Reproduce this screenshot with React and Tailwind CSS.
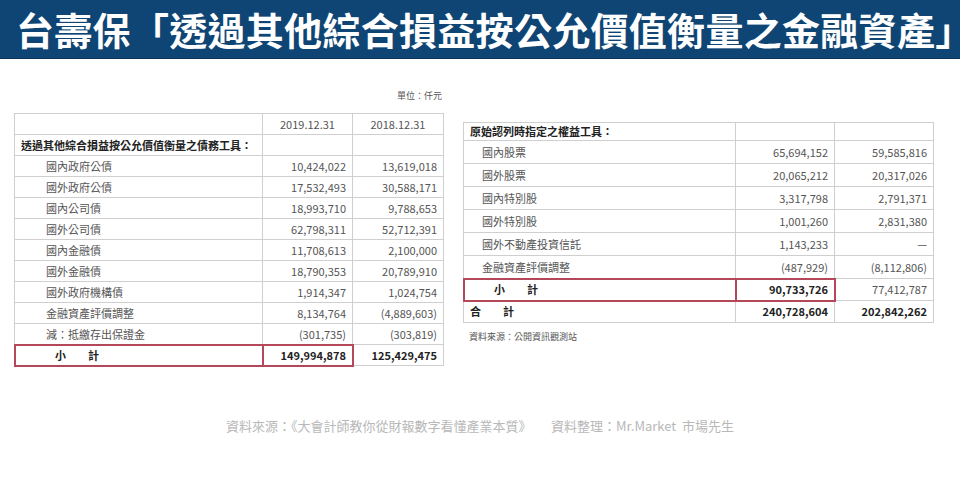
const left = [
  ['國內政府公債', '10,424,022', '13,619,018'],
  ['國外政府公債', '17,532,493', '30,588,171'],
  ['國內公司債', '18,993,710', '9,788,653'],
  ['國外公司債', '62,798,311', '52,712,391'],
  ['國內金融債', '11,708,613', '2,100,000'],
  ['國外金融債', '18,790,353', '20,789,910'],
  ['國外政府機構債', '1,914,347', '1,024,754'],
  ['金融資產評價調整', '8,134,764', '(4,889,603)'],
  ['減：抵繳存出保證金', '(301,735)', '(303,819)'],
]

const right = [
  ['國內股票', '65,694,152', '59,585,816'],
  ['國外股票', '20,065,212', '20,317,026'],
  ['國內特別股', '3,317,798', '2,791,371'],
  ['國外特別股', '1,001,260', '2,831,380'],
  ['國外不動產投資信託', '1,143,233', '—'],
  ['金融資產評價調整', '(487,929)', '(8,112,806)'],
]

const font = { fontFamily: '"Noto Sans CJK TC", "Noto Sans", sans-serif' }

function Cell({ children, className = '' }) {
  return <td className={`border border-[#cfcfcf] px-1.5 leading-none ${className}`}>{children}</td>
}

export default function App() {
  return (
    <div className="w-[960px] h-[502px] bg-white overflow-hidden" style={font}>
      <div className="h-[59px] bg-[#0f4574] flex items-center pl-[16px] border-b border-[#0a3358]">
        <h1 className="text-white text-[38px] font-bold tracking-[0.3px] leading-none whitespace-nowrap">台壽保「透過其他綜合損益按公允價值衡量之金融資產」</h1>
      </div>

      <div className="flex px-[14px] mt-[30px] gap-[19px]">
        <div className="w-[430px]">
          <div className="text-right text-[9px] text-[#555] pr-[2px] h-[24px]">單位：仟元</div>
          <table className="w-full border-collapse text-[11px] text-[#555]">
            <tbody>
              <tr className="h-[21px]">
                <Cell className="w-[248px]"></Cell>
                <Cell className="w-[90px] text-center">2019.12.31</Cell>
                <Cell className="text-center">2018.12.31</Cell>
              </tr>
              <tr className="h-[21px]">
                <Cell className="font-bold text-[#222]">透過其他綜合損益按公允價值衡量之債務工具：</Cell>
                <Cell></Cell>
                <Cell></Cell>
              </tr>
              {left.map(r => (
                <tr key={r[0]} className="h-[21px]">
                  <Cell className="pl-[31px]">{r[0]}</Cell>
                  <Cell className="text-right">{r[1]}</Cell>
                  <Cell className="text-right">{r[2]}</Cell>
                </tr>
              ))}
              <tr className="h-[21px] font-bold text-[#222]">
                <Cell className="pl-[40px] outline-2 outline-[#b5475a] -outline-offset-1">小　　計</Cell>
                <Cell className="text-right outline-2 outline-[#b5475a] -outline-offset-1">149,994,878</Cell>
                <Cell className="text-right">125,429,475</Cell>
              </tr>
            </tbody>
          </table>
        </div>

        <div className="w-[471px] pt-[33px]">
          <table className="w-full border-collapse text-[11px] text-[#555]">
            <tbody>
              <tr className="h-[18px]">
                <Cell className="w-[272px] font-bold text-[#222]">原始認列時指定之權益工具：</Cell>
                <Cell className="w-[99px]"></Cell>
                <Cell></Cell>
              </tr>
              {right.map(r => (
                <tr key={r[0]} className="h-[23px]">
                  <Cell className="pl-[18px]">{r[0]}</Cell>
                  <Cell className="text-right">{r[1]}</Cell>
                  <Cell className="text-right">{r[2]}</Cell>
                </tr>
              ))}
              <tr className="h-[22px] text-[#222]">
                <Cell className="pl-[30px] font-bold outline-2 outline-[#b5475a] -outline-offset-1">小　　計</Cell>
                <Cell className="text-right font-bold outline-2 outline-[#b5475a] -outline-offset-1">90,733,726</Cell>
                <Cell className="text-right text-[#555]">77,412,787</Cell>
              </tr>
              <tr className="h-[22px] font-bold text-[#222]">
                <Cell>合　　計</Cell>
                <Cell className="text-right">240,728,604</Cell>
                <Cell className="text-right">202,842,262</Cell>
              </tr>
            </tbody>
          </table>
          <div className="text-[9px] text-[#555] mt-[7px] pl-[6px]">資料來源：公開資訊觀測站</div>
        </div>
      </div>

      <div className="text-center text-[13px] text-[#b8b8b8] mt-[50px] whitespace-pre">
        資料來源：《大會計師教你從財報數字看懂產業本質》　　資料整理：Mr.Market  市場先生
      </div>
    </div>
  )
}
